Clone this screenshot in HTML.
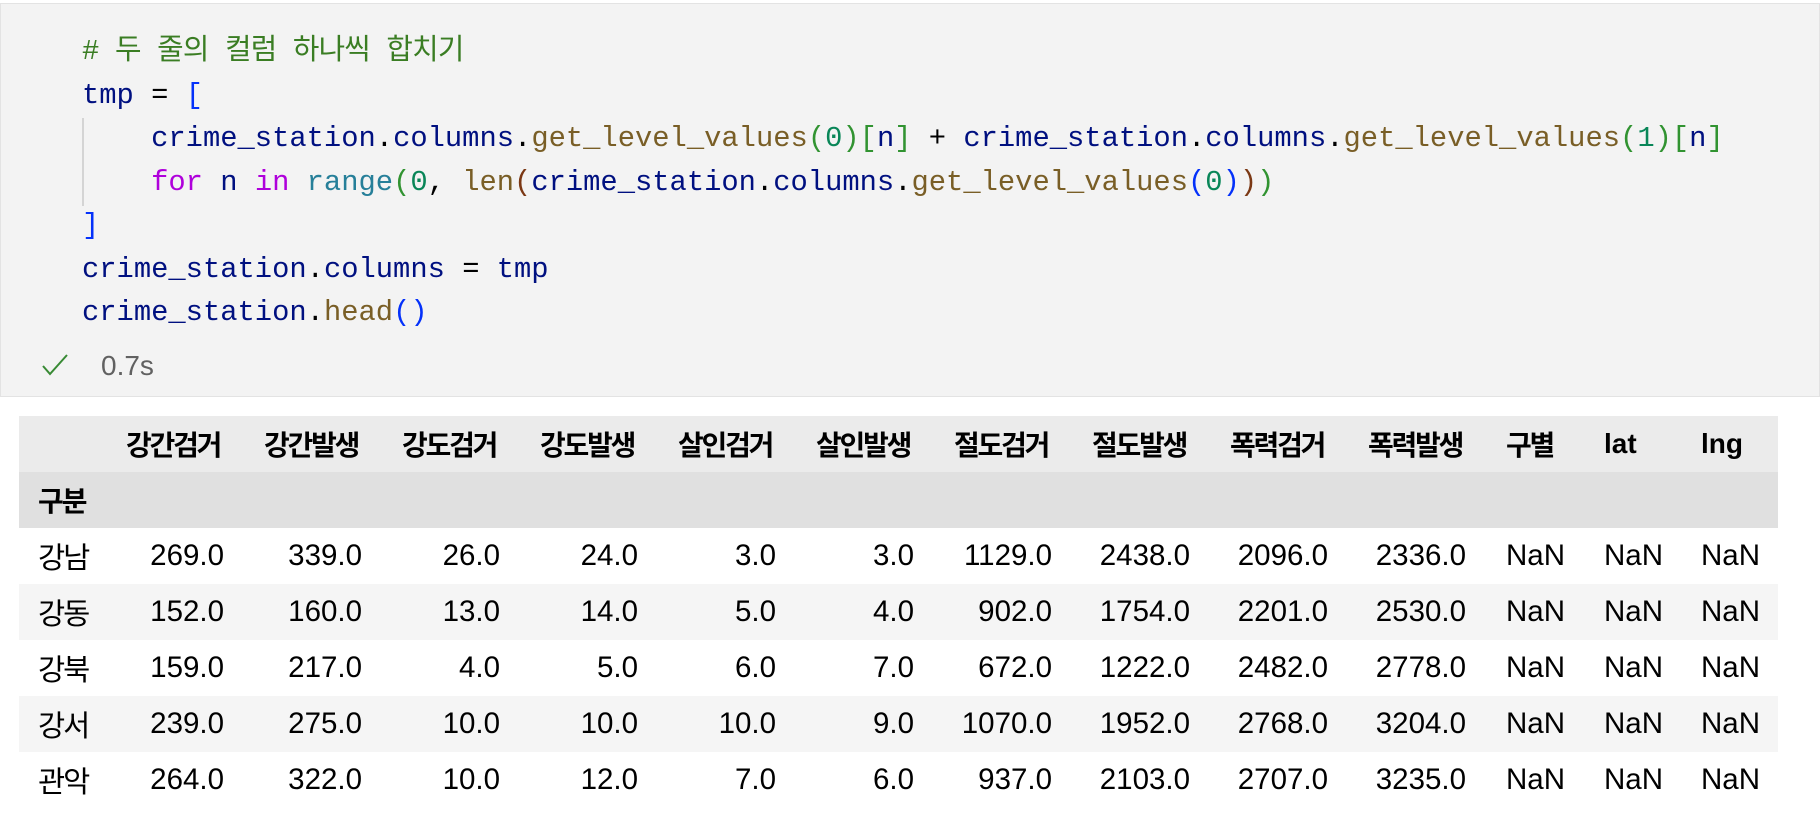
<!DOCTYPE html>
<html><head><meta charset="utf-8"><style>
body{margin:0;width:1820px;height:830px;background:#fff;overflow:hidden;position:relative;font-family:"Liberation Sans","Noto Sans CJK KR",sans-serif;}
.cell{position:absolute;left:0;top:3px;width:1818px;height:392px;background:#f3f3f3;border:1px solid #e3e3e3;}
.code{position:absolute;left:82px;top:30px;font-family:"Liberation Mono","Noto Sans CJK KR",monospace;font-size:28.8px;line-height:43.5px;white-space:pre;color:#001080;}
.guide{position:absolute;left:82px;top:118px;width:2px;height:88px;background:#d4d4d4;}
.cm{color:#3a7d23;letter-spacing:-0.8px}
.f{color:#795e26}.b{color:#0431fa}.g{color:#319331}.br{color:#7b3814}.k{color:#af00db}.t{color:#267f99}.n{color:#098658}.o{color:#000}
.status{position:absolute;top:350px;left:41px;font-size:28px;color:#616161;}
table{position:absolute;left:19px;top:416px;width:1759px;border-collapse:collapse;font-size:29.5px;color:#000;table-layout:fixed;}
td,th{height:56px;padding:0 12px 0 28px;white-space:nowrap;box-sizing:border-box;overflow:visible;}
th{text-align:left;font-weight:bold;letter-spacing:-2.2px;font-size:28px}
td{text-align:right;}
tr.h{background:#ebebeb}tr.i{background:#e0e0e0}tr.s{background:#f5f5f5}
.ix{text-align:left;padding-left:19px;letter-spacing:-2px;font-weight:normal}
</style></head><body>
<div class="cell"></div>
<div class="guide"></div>
<div class="code"><span class="cm"># 두 줄의 컬럼 하나씩 합치기</span>
tmp <span class="o">=</span> <span class="b">[</span>
    crime_station<span class="o">.</span>columns<span class="o">.</span><span class="f">get_level_values</span><span class="g">(</span><span class="n">0</span><span class="g">)</span><span class="g">[</span>n<span class="g">]</span> <span class="o">+</span> crime_station<span class="o">.</span>columns<span class="o">.</span><span class="f">get_level_values</span><span class="g">(</span><span class="n">1</span><span class="g">)</span><span class="g">[</span>n<span class="g">]</span>
    <span class="k">for</span> n <span class="k">in</span> <span class="t">range</span><span class="g">(</span><span class="n">0</span><span class="o">,</span> <span class="f">len</span><span class="br">(</span>crime_station<span class="o">.</span>columns<span class="o">.</span><span class="f">get_level_values</span><span class="b">(</span><span class="n">0</span><span class="b">)</span><span class="br">)</span><span class="g">)</span>
<span class="b">]</span>
crime_station<span class="o">.</span>columns <span class="o">=</span> tmp
crime_station<span class="o">.</span><span class="f">head</span><span class="b">()</span></div>
<div class="status"><svg width="28" height="24" viewBox="0 0 28 24" style="vertical-align:-2px"><path d="M2 13 L9 21 L26 2" fill="none" stroke="#388a34" stroke-width="2"/></svg><span style="margin-left:32px">0.7s</span></div>
<table>
<colgroup><col style="width:79px"><col style="width:138px"><col style="width:138px"><col style="width:138px"><col style="width:138px"><col style="width:138px"><col style="width:138px"><col style="width:138px"><col style="width:138px"><col style="width:138px"><col style="width:138px"><col style="width:98px"><col style="width:97px"><col style="width:105px"></colgroup>
<tr class="h"><th></th><th>강간검거</th><th>강간발생</th><th>강도검거</th><th>강도발생</th><th>살인검거</th><th>살인발생</th><th>절도검거</th><th>절도발생</th><th>폭력검거</th><th>폭력발생</th><th>구별</th><th style="letter-spacing:0">lat</th><th style="letter-spacing:0">lng</th></tr>
<tr class="i"><th class="ix" style="font-weight:bold">구분</th><td></td><td></td><td></td><td></td><td></td><td></td><td></td><td></td><td></td><td></td><td></td><td></td><td></td></tr>
<tr><td class="ix">강남</td><td>269.0</td><td>339.0</td><td>26.0</td><td>24.0</td><td>3.0</td><td>3.0</td><td>1129.0</td><td>2438.0</td><td>2096.0</td><td>2336.0</td><td>NaN</td><td>NaN</td><td style="padding-right:21px">NaN</td></tr>
<tr class="s"><td class="ix">강동</td><td>152.0</td><td>160.0</td><td>13.0</td><td>14.0</td><td>5.0</td><td>4.0</td><td>902.0</td><td>1754.0</td><td>2201.0</td><td>2530.0</td><td>NaN</td><td>NaN</td><td style="padding-right:21px">NaN</td></tr>
<tr><td class="ix">강북</td><td>159.0</td><td>217.0</td><td>4.0</td><td>5.0</td><td>6.0</td><td>7.0</td><td>672.0</td><td>1222.0</td><td>2482.0</td><td>2778.0</td><td>NaN</td><td>NaN</td><td style="padding-right:21px">NaN</td></tr>
<tr class="s"><td class="ix">강서</td><td>239.0</td><td>275.0</td><td>10.0</td><td>10.0</td><td>10.0</td><td>9.0</td><td>1070.0</td><td>1952.0</td><td>2768.0</td><td>3204.0</td><td>NaN</td><td>NaN</td><td style="padding-right:21px">NaN</td></tr>
<tr><td class="ix">관악</td><td>264.0</td><td>322.0</td><td>10.0</td><td>12.0</td><td>7.0</td><td>6.0</td><td>937.0</td><td>2103.0</td><td>2707.0</td><td>3235.0</td><td>NaN</td><td>NaN</td><td style="padding-right:21px">NaN</td></tr>
</table>
</body></html>
